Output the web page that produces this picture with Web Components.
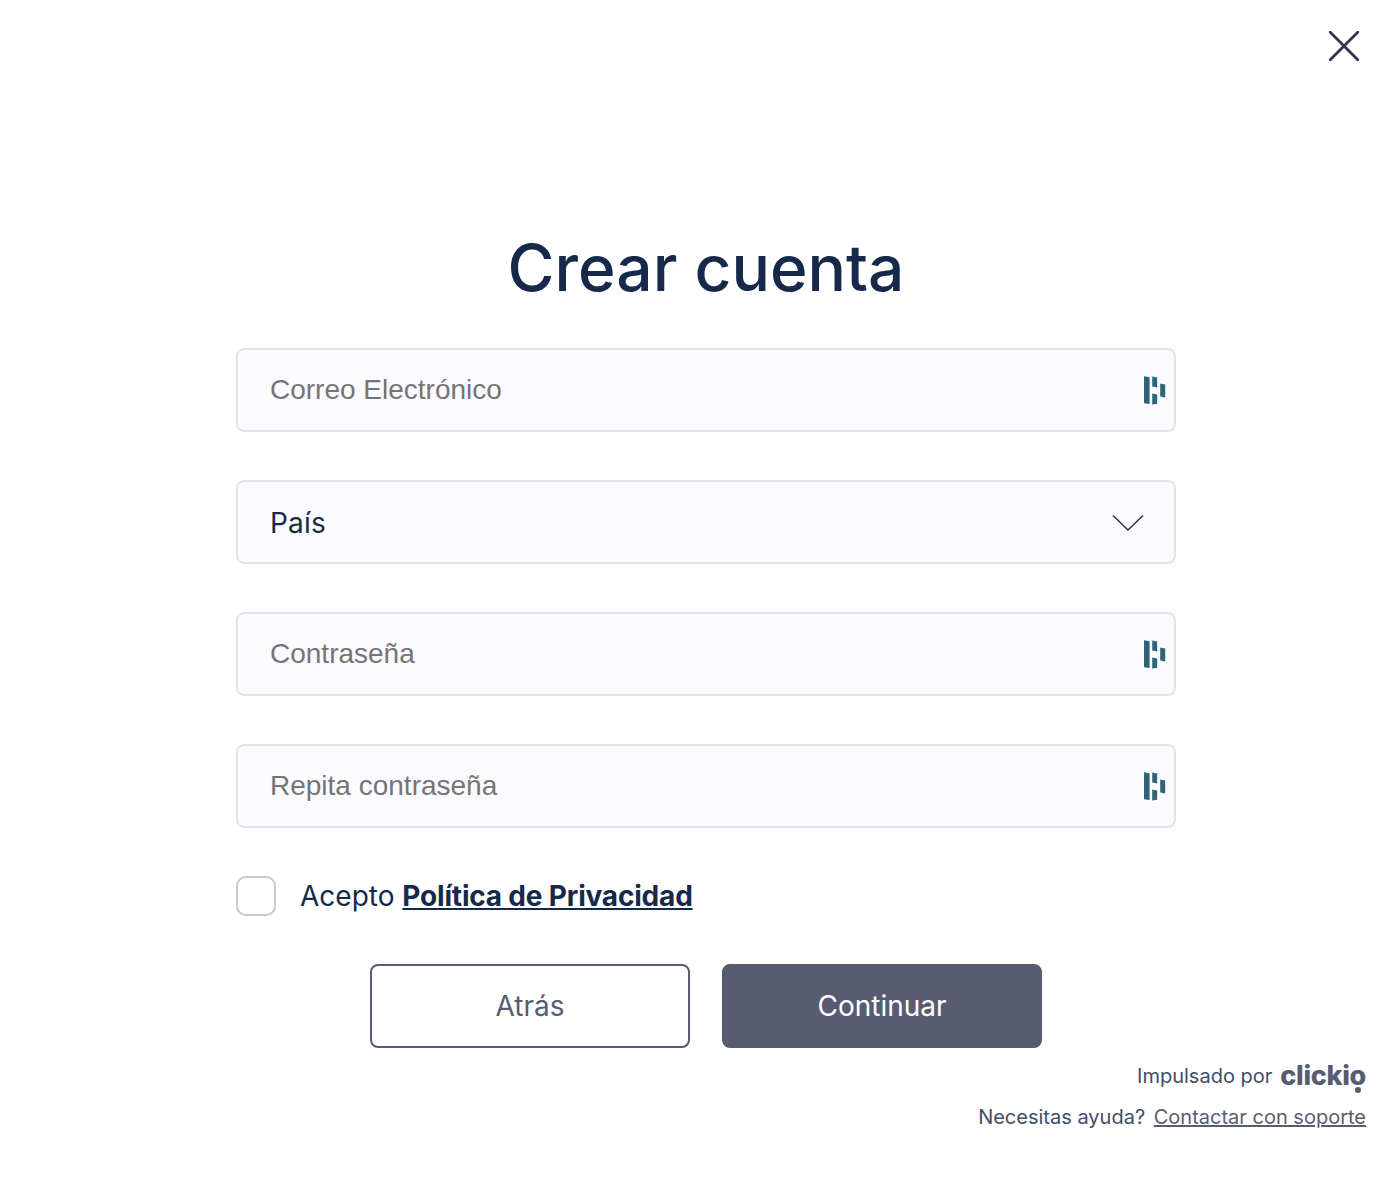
<!DOCTYPE html>
<html lang="es">
<head>
<meta charset="utf-8">
<title>Crear cuenta</title>
<style>
    html, body {
        margin: 0;
        background: #ffffff;
    }
</style>
</head>
<body>
<signup-page></signup-page>

<script>
// Small key icon shown at the end of the password-manager fields
const KEY_ICON = `
<svg width="22" height="30" viewBox="0 0 22 30" aria-hidden="true">
    <path d="M0 1.2 L5.6 2.2 V29 L0 28.2 Z" fill="#2f6476"/>
    <path d="M8.2 1.6 L13.2 2.6 V12.4 L8.2 11.4 Z" fill="#2f6476"/>
    <path d="M8.2 18.6 L13.2 19.6 V28.8 L8.2 29.4 Z" fill="#2f6476"/>
    <path d="M16.2 8.4 L21.2 9.4 V22.6 L16.2 21.6 Z" fill="#2f6476"/>
</svg>`;

class TextField extends HTMLElement {
    constructor() {
        super();
        this.shadowHTML = this.attachShadow({ mode: "open" });
    }

    connectedCallback() {
        this.render();
    }

    render() {
        const isSelect = this.hasAttribute("select");
        const icon = isSelect
            ? `<svg class="chevron" width="32" height="18" viewBox="0 0 32 18" aria-hidden="true"><path d="M1 1.5 L16 16 L31 1.5" fill="none" stroke="#2f3350" stroke-width="1.6"/></svg>`
            : KEY_ICON;
        this.shadowHTML.innerHTML = `
        <style>
            :host {
                display: flex;
                align-items: center;
                justify-content: space-between;
                box-sizing: border-box;
                height: 84px;
                padding: 0 8px 0 32px;
                background: #fafaff;
                border: 2px solid #e3e3ec;
                border-radius: 8px;
            }

            .label {
                font: 400 28px/36px "Liberation Sans", Arial, sans-serif;
                color: #757575;
            }

            :host([select]) {
                padding: 2px 30px 0 32px;
            }

            :host([select]) .label {
                font-family: Inter, sans-serif;
                letter-spacing: 0.2px;
                color: #1b2a45;
            }

            svg {
                display: block;
            }
        </style>
        <span class="label"><slot></slot></span>
        ${icon}
        `;
    }
}

class PrivacyCheck extends HTMLElement {
    constructor() {
        super();
        this.shadowHTML = this.attachShadow({ mode: "open" });
    }

    connectedCallback() {
        this.shadowHTML.innerHTML = `
        <style>
            :host {
                display: flex;
                align-items: center;
                gap: 24px;
                font: 400 28px/40px Inter, sans-serif;
                color: #16294a;
            }

            .box {
                box-sizing: border-box;
                width: 40px;
                height: 40px;
                background: #ffffff;
                border: 2px solid #c6c7d6;
                border-radius: 10px;
            }
        </style>
        <div class="box"></div>
        <span><slot></slot></span>
        `;
    }
}

class FormButton extends HTMLElement {
    constructor() {
        super();
        this.shadowHTML = this.attachShadow({ mode: "open" });
    }

    connectedCallback() {
        this.shadowHTML.innerHTML = `
        <style>
            :host {
                display: flex;
                align-items: center;
                justify-content: center;
                box-sizing: border-box;
                width: 320px;
                height: 84px;
                border: 2px solid #585c72;
                border-radius: 8px;
                background: #ffffff;
                color: #585c72;
                font: 400 28px/36px Inter, sans-serif;
            }

            :host([primary]) {
                background: #585c72;
                color: #ffffff;
            }
        </style>
        <slot></slot>
        `;
    }
}

class SignupPage extends HTMLElement {
    constructor() {
        super();
        this.shadowHTML = this.attachShadow({ mode: "open" });
    }

    connectedCallback() {
        this.render();
    }

    render() {
        this.shadowHTML.innerHTML = `
        <style>
            :host {
                display: block;
                box-sizing: border-box;
                position: relative;
                height: 1178px;
                padding: 0 24px 0 236px;
                font-family: Inter, sans-serif;
            }

            .close {
                position: absolute;
                top: 31px;
                right: 31px;
            }

            .form {
                display: flex;
                flex-direction: column;
                width: 940px;
                padding-top: 228px;
            }

            h1 {
                margin: 0 0 40px;
                font: 500 64px/80px Inter, sans-serif;
                color: #16294a;
                text-align: center;
            }

            .fields {
                display: flex;
                flex-direction: column;
                gap: 48px;
            }

            privacy-check {
                margin-top: 48px;
            }

            privacy-check a {
                font-weight: 700;
                letter-spacing: -0.19px;
                color: #16294a;
            }

            .buttons {
                display: flex;
                justify-content: center;
                gap: 32px;
                margin-top: 48px;
            }

            .footer {
                display: flex;
                flex-direction: column;
                align-items: flex-end;
                gap: 11px;
                margin-top: 12px;
                font-size: 20px;
                line-height: 28px;
                color: #3f4d68;
            }

            .powered {
                display: flex;
                align-items: center;
                gap: 8px;
            }

            .logo {
                position: relative;
                font: 800 27px/32px Inter, sans-serif;
                letter-spacing: -0.3px;
                color: #585c72;
            }

            .logo::after {
                content: "";
                position: absolute;
                right: 5px;
                bottom: -1px;
                width: 6px;
                height: 6px;
                border-radius: 50%;
                background: #585c72;
            }

            .footer a {
                margin-left: 3px;
                color: #585c72;
            }
        </style>

        <svg class="close" width="30" height="30" viewBox="0 0 30 30" aria-hidden="true">
            <path d="M1 1 L29 29 M29 1 L1 29" fill="none" stroke="#2f3350" stroke-width="2.8" stroke-linecap="round"/>
        </svg>

        <div class="form">
            <h1>Crear cuenta</h1>
            <div class="fields">
                <text-field>Correo Electrónico</text-field>
                <text-field select>País</text-field>
                <text-field>Contraseña</text-field>
                <text-field>Repita contraseña</text-field>
            </div>
            <privacy-check>Acepto <a href="#">Política de Privacidad</a></privacy-check>
            <div class="buttons">
                <form-button>Atrás</form-button>
                <form-button primary>Continuar</form-button>
            </div>
        </div>

        <div class="footer">
            <div class="powered">Impulsado por <span class="logo">clickio</span></div>
            <div>Necesitas ayuda? <a href="#">Contactar con soporte</a></div>
        </div>
        `;
    }
}

customElements.define("text-field", TextField);
customElements.define("privacy-check", PrivacyCheck);
customElements.define("form-button", FormButton);
customElements.define("signup-page", SignupPage);
</script>
</body>
</html>
